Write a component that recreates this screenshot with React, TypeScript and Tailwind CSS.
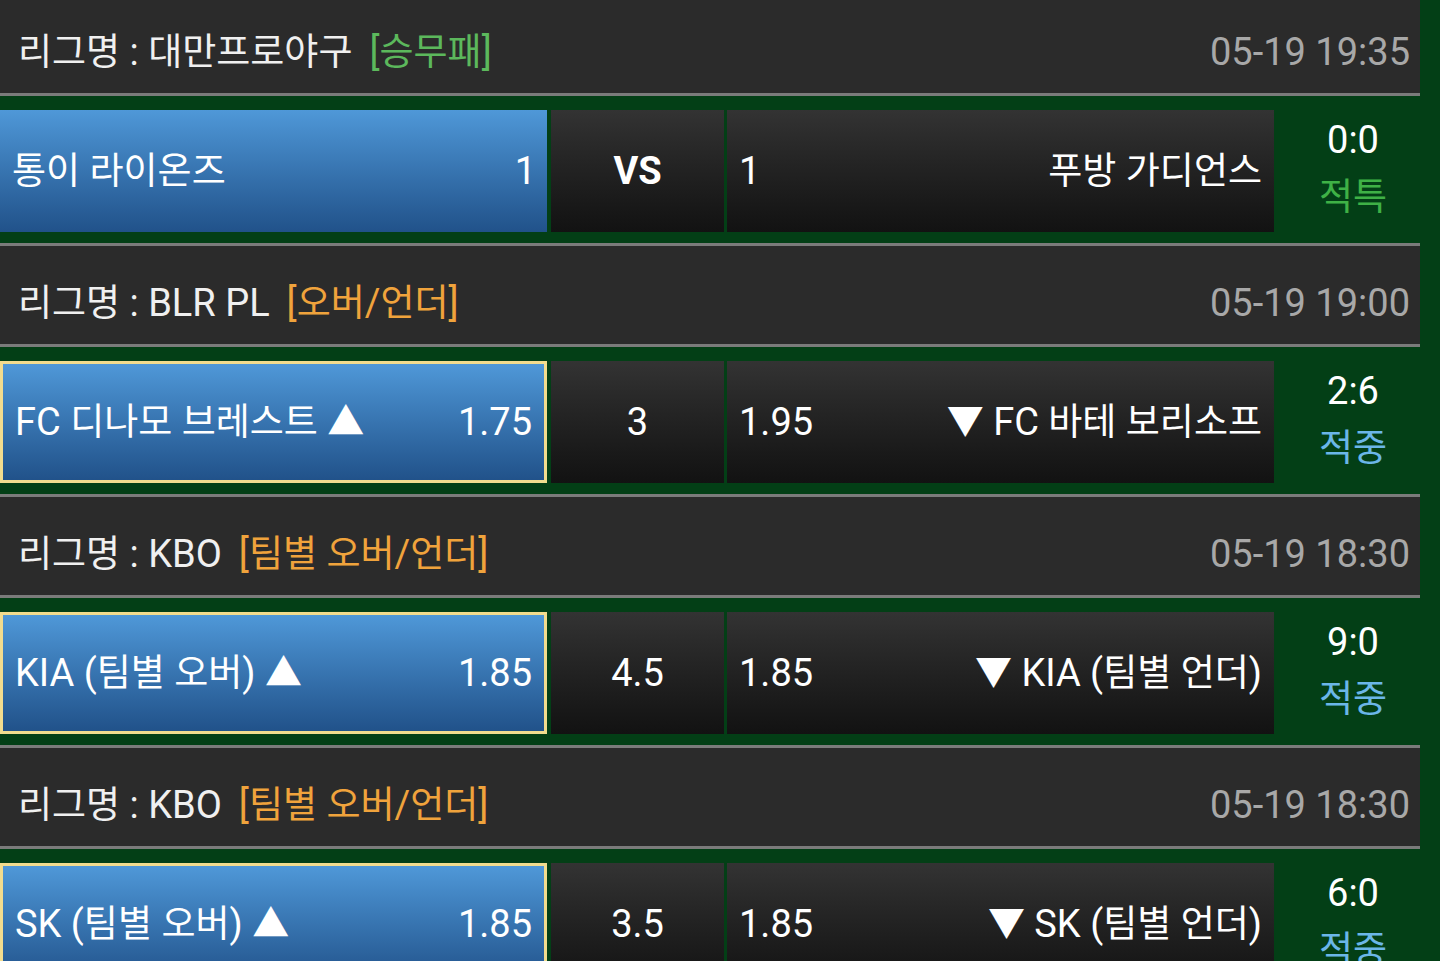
import type { ReactNode } from "react";

type Match = {
  league: string;
  tag: string;
  tagColor: "green" | "orange";
  time: string;
  home: string;
  homeOdds: string;
  mid: string;
  midBold?: boolean;
  awayOdds: string;
  away: string;
  selected: boolean;
  score: string;
  result: string;
  resultColor: "green" | "blue";
};

const matches: Match[] = [
  {
    league: "대만프로야구",
    tag: "[승무패]",
    tagColor: "green",
    time: "05-19 19:35",
    home: "통이 라이온즈",
    homeOdds: "1",
    mid: "VS",
    midBold: true,
    awayOdds: "1",
    away: "푸방 가디언스",
    selected: false,
    score: "0:0",
    result: "적특",
    resultColor: "green",
  },
  {
    league: "BLR PL",
    tag: "[오버/언더]",
    tagColor: "orange",
    time: "05-19 19:00",
    home: "FC 디나모 브레스트 ▲",
    homeOdds: "1.75",
    mid: "3",
    awayOdds: "1.95",
    away: "▼ FC 바테 보리소프",
    selected: true,
    score: "2:6",
    result: "적중",
    resultColor: "blue",
  },
  {
    league: "KBO",
    tag: "[팀별 오버/언더]",
    tagColor: "orange",
    time: "05-19 18:30",
    home: "KIA (팀별 오버) ▲",
    homeOdds: "1.85",
    mid: "4.5",
    awayOdds: "1.85",
    away: "▼ KIA (팀별 언더)",
    selected: true,
    score: "9:0",
    result: "적중",
    resultColor: "blue",
  },
  {
    league: "KBO",
    tag: "[팀별 오버/언더]",
    tagColor: "orange",
    time: "05-19 18:30",
    home: "SK (팀별 오버) ▲",
    homeOdds: "1.85",
    mid: "3.5",
    awayOdds: "1.85",
    away: "▼ SK (팀별 언더)",
    selected: true,
    score: "6:0",
    result: "적중",
    resultColor: "blue",
  },
];

const HANGUL = /([\uAC00-\uD7A3\u3131-\u318E\u25B2\u25BC]+)/;

function Txt({ s }: { s: string }): ReactNode {
  return (
    <>
      {s.split(HANGUL).map((part, i) =>
        i % 2 ? (
          <span key={i} className="text-[37px]">
            {part}
          </span>
        ) : (
          part
        )
      )}
    </>
  );
}

function Header({ m }: { m: Match }) {
  return (
    <div className="flex h-[98px] items-center justify-between bg-[#2b2b2b] pl-[18px] pr-[10px] pt-[15px]">
      <div className="flex items-baseline whitespace-pre text-[#f0f0f0]">
        <span>
          <Txt s={`리그명 : ${m.league}`} />
        </span>
        <span className={`ml-[17px] ${m.tagColor === "green" ? "text-[#5cb85c]" : "text-[#f0a33c]"}`}>
          <Txt s={m.tag} />
        </span>
      </div>
      <div className="text-[#a8a8a8]">{m.time}</div>
    </div>
  );
}

function Row({ m }: { m: Match }) {
  return (
    <div className="flex bg-[#033f16] pb-[11px] pt-[14px]">
      <div
        className={`flex h-[122px] w-[547px] items-center justify-between whitespace-pre bg-gradient-to-b from-[#4f98d8] to-[#21528a] text-white ${
          m.selected ? "border-[3px] border-[#f2dc8e] pl-3 pr-3" : "pl-3 pr-[11px]"
        }`}
      >
        <span>
          <Txt s={m.home} />
        </span>
        <span>{m.homeOdds}</span>
      </div>
      <div
        className={`ml-[4px] flex h-[122px] w-[173px] items-center justify-center bg-gradient-to-b from-[#333333] to-[#121212] text-white ${
          m.midBold ? "font-bold" : ""
        }`}
      >
        {m.mid}
      </div>
      <div className="ml-[3px] flex h-[122px] w-[547px] items-center justify-between whitespace-pre bg-gradient-to-b from-[#333333] to-[#121212] pl-3 pr-3 text-white">
        <span>{m.awayOdds}</span>
        <span>
          <Txt s={m.away} />
        </span>
      </div>
      <div className="flex h-[122px] w-[146px] flex-col items-center justify-center pb-[5px] pl-3 leading-[57px]">
        <div className="text-white">{m.score}</div>
        <div
          className={`text-[37px] ${m.resultColor === "green" ? "text-[#3fb146]" : "text-[#6bb6e8]"}`}
        >
          {m.result}
        </div>
      </div>
    </div>
  );
}

export default function App() {
  return (
    <div
      className="h-[961px] w-[1440px] overflow-hidden bg-[#033f16] text-[38px] leading-none"
      style={{ fontFamily: "Roboto, 'Noto Sans CJK KR', sans-serif" }}
    >
      <div className="-mt-[5px] w-[1420px]">
        {matches.map((m, i) => (
          <div key={i}>
            <Header m={m} />
            <div className="h-[3px] bg-[#7b7b7b]" />
            <Row m={m} />
            <div className="h-[3px] bg-[#7b7b7b]" />
          </div>
        ))}
      </div>
    </div>
  );
}
